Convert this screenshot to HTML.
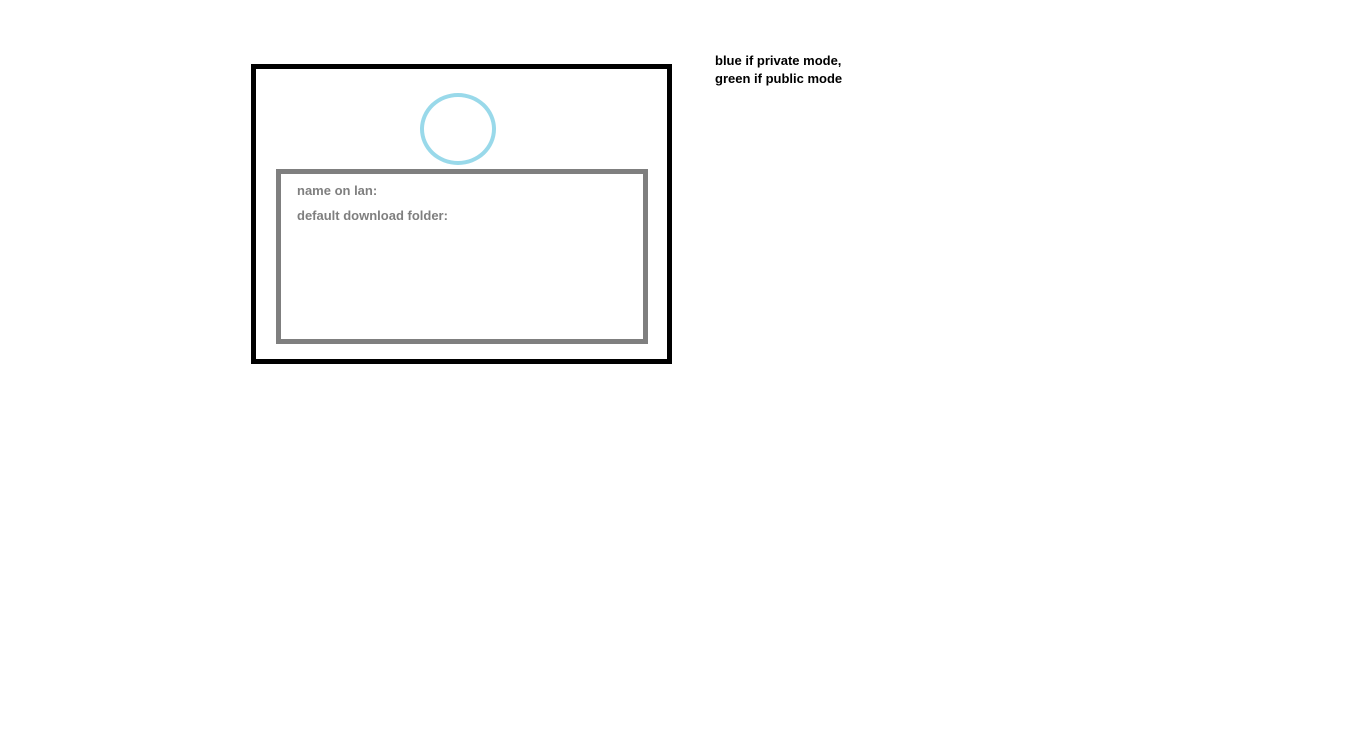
<!DOCTYPE html>
<html><head><style>
body{margin:0;width:1366px;height:734px;background:#fff;position:relative;overflow:hidden;font-family:"Liberation Sans",sans-serif;font-weight:bold;}
.a{position:absolute;box-sizing:border-box;}
.t{position:absolute;font-size:13px;color:#7f7f7f;white-space:nowrap;}
</style></head><body>
<div class="a" style="left:251px;top:64px;width:421px;height:300px;border:5px solid #000"></div>
<div class="a" style="left:276px;top:169px;width:372px;height:175px;border:5px solid #7f7f7f"></div>
<div class="a" style="left:420px;top:93px;width:76px;height:72px;border:4px solid #99d9ea;border-radius:50%"></div>
<div class="t" style="left:297px;top:183px">name on lan:</div>
<div class="t" style="left:297px;top:208px">default download folder:</div>
<div class="t" style="left:715px;top:52px;color:#000;line-height:18px">blue if private mode,<br>green if public mode</div>
</body></html>
